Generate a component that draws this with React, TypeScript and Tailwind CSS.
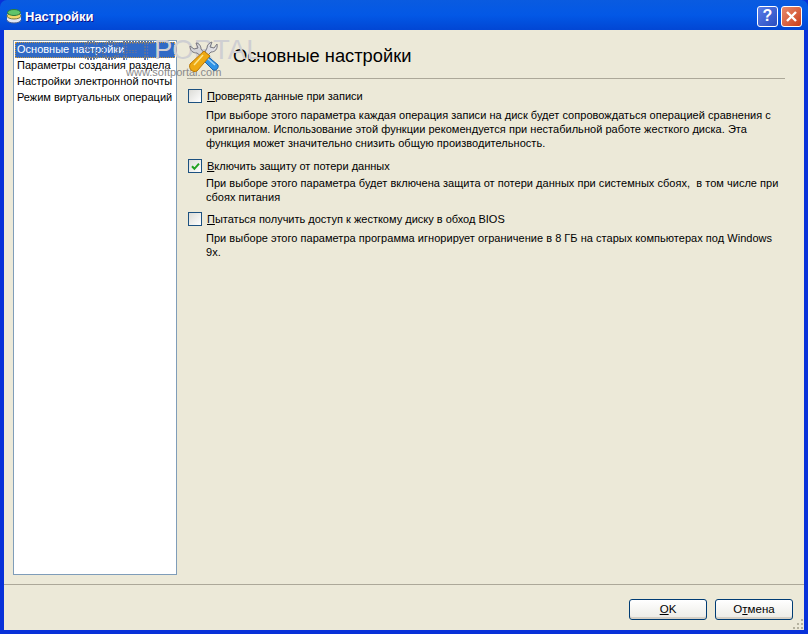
import React from 'react';

const menu = ['Основные настройки', 'Параметры создания раздела', 'Настройки электронной почты', 'Режим виртуальных операций'];

const options = [
  {
    first: 'П',
    rest: 'роверять данные при записи',
    checked: false,
    gap: 'mt-[5px]',
    after: 'mb-[9px]',
    lines: [
      'При выборе этого параметра каждая операция записи на диск будет сопровождаться операцией сравнения с',
      'оригиналом. Использование этой функции рекомендуется при нестабильной работе жесткого диска. Эта',
      'функция может значительно снизить общую производительность.',
    ],
  },
  {
    first: 'В',
    rest: 'ключить защиту от потери данных',
    checked: true,
    gap: 'mt-[3px]',
    after: 'mb-[8px]',
    lines: [
      'При выборе этого параметра будет включена защита от потери данных при системных сбоях,  в том числе при',
      'сбоях питания',
    ],
  },
  {
    first: 'П',
    rest: 'ытаться получить доступ к жесткому диску в обход BIOS',
    checked: false,
    gap: 'mt-[5px]',
    after: '',
    lines: [
      'При выборе этого параметра программа игнорирует ограничение в 8 ГБ на старых компьютерах под Windows',
      '9x.',
    ],
  },
];

function Checkbox({ checked }: { checked: boolean }) {
  return (
    <div className="w-[14px] h-[14px] shrink-0 border border-[#1c5180] bg-gradient-to-br from-[#dcdcd7] to-white flex items-center justify-center">
      {checked && (
        <svg width="9" height="9" viewBox="0 0 9 9">
          <path d="M1 4.2 L3.4 6.8 L8 1.6" fill="none" stroke="#21a121" strokeWidth="2" />
        </svg>
      )}
    </div>
  );
}

function ToolsIcon() {
  return (
    <svg width="32" height="32" viewBox="0 0 32 32">
      {/* silver wrench going to the upper left, blue handle */}
      <path d="M8 3 L10 8 L6 9 L2 6 C2 11 5 13 9 13 L14 17 L17 14 L13 9 C13 6 11 3 8 3 Z" fill="#d4d4d8" stroke="#77777f" strokeWidth="1" />
      <path d="M17 14 L30 25 C31 28 28 31 25 30 L13 18 Z" fill="#2f93e6" stroke="#1b63ad" strokeWidth="1" />
      <path d="M19 18 L27 25" stroke="#a6d6f7" strokeWidth="1.5" />
      {/* silver fork going to the upper right, gold handle */}
      <path d="M24 2 L22 7 L26 8 L29 4 C30 9 27 12 23 12 L20 15 L17 12 L19 8 C19 5 21 3 24 2 Z" fill="#dedee2" stroke="#77777f" strokeWidth="1" />
      <path d="M16 11 L22 16 L9 31 C5 33 0 29 2 24 Z" fill="#eea913" stroke="#b87808" strokeWidth="1" />
      <path d="M15 15 L6 25" stroke="#fde68a" strokeWidth="1.5" />
    </svg>
  );
}

function SoftMark() {
  return (
    <svg width="76" height="28" viewBox="0 0 76 28">
      <defs>
        <pattern id="softDots" width="3" height="3" patternUnits="userSpaceOnUse">
          <rect width="2" height="2" fill="#5f7299" />
        </pattern>
      </defs>
      <text x="1" y="23" fontFamily="Liberation Sans, sans-serif" fontWeight="bold" fontSize="27" fill="url(#softDots)">SOFT</text>
    </svg>
  );
}

function XpButton({ children }: { children: React.ReactNode }) {
  return (
    <button className="w-[78px] h-[21px] rounded-[3px] border border-[#003c74] bg-gradient-to-b from-white to-[#ecebe5] shadow-[inset_0_-2px_0_#d6d0c5] text-[11.5px] text-black flex items-center justify-center">
      {children}
    </button>
  );
}

export default function App() {
  return (
    <div className="relative w-[808px] h-[634px] overflow-hidden flex flex-col bg-[#0831d9] font-['Liberation_Sans',sans-serif] text-[11px] text-black">
      {/* Title bar */}
      <div className="h-[30px] shrink-0 rounded-t-[7px] bg-gradient-to-b from-[#0a5be0] via-[#0358e6] to-[#0246d4] flex items-center pl-[6px] pr-[6px]">
        <svg width="16" height="16" viewBox="0 0 16 16" className="mr-[3px] mt-[2px]">
          <ellipse cx="8" cy="12" rx="7" ry="3" fill="#dfe6f5" stroke="#50608a" />
          <rect x="1" y="6" width="14" height="6" fill="#dfe6f5" />
          <ellipse cx="8" cy="8" rx="7" ry="3" fill="#f2d76a" stroke="#7a7a3a" />
          <ellipse cx="8" cy="4.5" rx="6.5" ry="3" fill="#5fc46a" stroke="#2c7a3a" />
        </svg>
        <span className="mt-[3px] text-white font-bold text-[13px] [text-shadow:1px_1px_0_#0f1089]">Настройки</span>
        <div className="ml-auto flex gap-[3px] mt-[2px]">
          <div className="w-[21px] h-[21px] rounded-[3px] border border-white bg-gradient-to-br from-[#5b7ee8] to-[#2a4cc0] flex items-center justify-center text-white font-bold text-[16px]">?</div>
          <div className="w-[21px] h-[21px] rounded-[3px] border border-white bg-gradient-to-br from-[#e8896a] to-[#c93c15] flex items-center justify-center">
            <svg width="13" height="13" viewBox="0 0 13 13">
              <path d="M2 2 L11 11 M11 2 L2 11" stroke="white" strokeWidth="2.4" />
            </svg>
          </div>
        </div>
      </div>

      {/* Client area */}
      <div className="flex-1 mx-[4px] mb-[4px] bg-[#ece9d8] flex flex-col min-h-0">
        <div className="flex-1 flex min-h-0 pl-[9px] pt-[10px] pr-[19px] pb-[9px]">
          <div className="w-[164px] shrink-0 bg-white border border-[#7f9db9] pt-px px-px">
            {menu.map((item, i) => (
              <div key={item} className={`h-[16px] pl-[2px] leading-[15px] whitespace-nowrap ${i === 0 ? 'bg-[#316ac5] text-white outline-1 outline-dotted outline-offset-[-1px] outline-[#ce9a3a]' : ''}`}>
                {item}
              </div>
            ))}
          </div>

          <div className="flex-1 ml-[10px] min-w-0">
            <div className="h-[38px] pl-[46px] pt-[6px] text-[18.3px] leading-[20px] whitespace-nowrap">Основные настройки</div>
            <div className="h-px bg-[#aca899]" />
            <div className="mt-[10px] pl-px">
              {options.map(option => (
                <div key={option.first + option.rest} className={option.after}>
                  <div className="flex items-center h-[14px]">
                    <Checkbox checked={option.checked} />
                    <span className="ml-[5px] whitespace-nowrap">
                      <span className="underline">{option.first}</span>
                      {option.rest}
                    </span>
                  </div>
                  <div className={`${option.gap} pl-[18px] leading-[14px] whitespace-pre tracking-[0.03px]`}>
                    {option.lines.map(line => (
                      <div key={line}>{line}</div>
                    ))}
                  </div>
                </div>
              ))}
            </div>
          </div>
        </div>

        <div className="h-px bg-[#aca899] shrink-0" />
        <div className="relative h-[45px] shrink-0 flex justify-end items-start gap-[8px] pt-[14px] pr-[11px]">
          <XpButton><span className="underline">O</span>K</XpButton>
          <XpButton>О<span className="underline">т</span>мена</XpButton>
          <svg width="12" height="12" viewBox="0 0 12 12" className="absolute right-0 bottom-0" fill="#b5b29f">
            <rect x="9" y="1" width="2" height="2" />
            <rect x="5" y="5" width="2" height="2" />
            <rect x="9" y="5" width="2" height="2" />
            <rect x="1" y="9" width="2" height="2" />
            <rect x="5" y="9" width="2" height="2" />
            <rect x="9" y="9" width="2" height="2" />
          </svg>
        </div>
      </div>

      {/* Watermark over the dialog */}
      <div className="absolute left-[81px] top-[37px] pointer-events-none">
        <SoftMark />
      </div>
      <div className="absolute left-[154px] top-[34px] text-[27.5px] leading-[32px] text-[#cfcfd2] pointer-events-none">PORTAL</div>
      <div className="absolute left-[126px] top-[66px] text-[11px] leading-[12px] text-[#8a8a8a] pointer-events-none">www.softportal.com</div>
      <div className="absolute left-[188px] top-[40px] pointer-events-none">
        <ToolsIcon />
      </div>
    </div>
  );
}
